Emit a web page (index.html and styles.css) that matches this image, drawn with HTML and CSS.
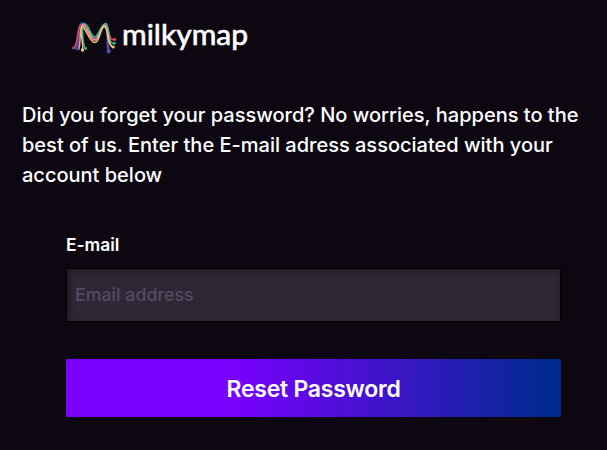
FILE: index.html
```html
<!DOCTYPE html>
<html lang="en">
<head>
    <meta charset="UTF-8">
    <meta name="viewport" content="width=device-width, initial-scale=1.0">
    <title>Milkymap - Reset Password</title>
    <link rel="stylesheet" href="styles.css">
</head>
<body>
    <header class="header">
        <svg class="logo" width="180" height="40" viewBox="0 0 180 40" role="img" aria-label="milkymap">
            <!-- colored strands -->
            <g class="strands">
                <path stroke="#4b4fa8" d="M7.5 31 C10 24 7 7 12 5 C17 4 20 20 25 20 C30 20 30 5 35 6 C39 8 36 24 38 33"/>
                <path stroke="#5a4ea6" d="M5 31 C9 27 8 12 12 9 M37 12 C39 20 36 28 40 33"/>
                <path stroke="#e8485f" d="M3 30 C9 28 6 10 11 7 C16 6 20 23 25 22.5 C30 22 30 8 35 7 C40 8 38 24 44.5 21.5"/>
                <path stroke="#32b58c" d="M15.5 30.5 C12 25 12 7 14 5.5 C19 5 20 19 25 19 C29 18 31 5 36 5.5 C40 8 37 27 44.5 25.5"/>
                <path stroke="#e79aa8" d="M9 31 C11 24 9 8 13 6.5 C17 6 20 22 25 21.5 C30 21 31 7 35 7 C38 9 38 26 42 29"/>
                <path stroke="#e9c878" d="M12.5 32 C14 26 9 11 12 8.5 C15 8 20 25 25 24.5 C30 24 30 10 34 8.5 C39 9 36 27 43 29"/>
            </g>
            <circle cx="3" cy="30" r="1.2" fill="#b9405f"/>
            <circle cx="7.5" cy="31" r="1.4" fill="#4b4fa8"/>
            <circle cx="12.5" cy="32" r="1.7" fill="#e9c878"/>
            <circle cx="15.7" cy="30.5" r="1.4" fill="#32b58c"/>
            <circle cx="38.5" cy="33.5" r="2" fill="#5350a8"/>
            <circle cx="44.5" cy="21.3" r="1.6" fill="#e8485f"/>
            <circle cx="44.5" cy="25.3" r="1.4" fill="#32b58c"/>
            <circle cx="43.3" cy="29" r="1.5" fill="#e9c878"/>
            <text class="wordmark" x="52" y="27" textLength="126" lengthAdjust="spacingAndGlyphs">milkymap</text>
        </svg>
    </header>

    <p class="intro">Did you forget your password? No worries, happens to the best of us. Enter the E-mail adress associated with your account below</p>

    <form class="reset-form">
        <label class="label" for="email">E-mail</label>
        <input class="input" type="email" id="email" placeholder="Email address">
        <button class="button" type="submit">Reset Password</button>
    </form>
</body>
</html>
```

FILE: styles.css
```css
* {
    margin: 0;
    padding: 0;
    box-sizing: border-box;
}

body {
    font-family: Inter, sans-serif;
    background: #0d0711;
    color: #ffffff;
    min-height: 100vh;
    padding: 18px 22px 0;
}

.header {
    height: 82px;
    padding-left: 48px;
}

.logo {
    display: block;
    overflow: visible;
}

.strands {
    fill: none;
    stroke-width: 1.5;
    stroke-linecap: round;
}

.wordmark {
    font-family: Lato, sans-serif;
    font-size: 28px;
    font-weight: 400;
    fill: #ffffff;
    stroke: #ffffff;
    stroke-width: 0.6;
    stroke-linejoin: round;
}

.intro {
    font-size: 20px;
    font-weight: 500;
    line-height: 30px;
}

.reset-form {
    display: flex;
    flex-direction: column;
    width: 495px;
    margin: 43px 0 0 44px;
}

.label {
    font-size: 17.4px;
    font-weight: 600;
    line-height: 24px;
    margin-bottom: 11px;
}

.input {
    height: 54px;
    padding: 0 8px 2px;
    background: #2f2736;
    border: 1px solid #000000;
    box-shadow: inset 2px 2px 6px rgba(0, 0, 0, 0.4);
    color: #ffffff;
    font-family: inherit;
    font-size: 17.8px;
    font-weight: 500;
}

.input::placeholder {
    color: #544b62;
}

.button {
    height: 58px;
    margin-top: 37px;
    padding-top: 2px;
    border: none;
    border-radius: 2px;
    background: linear-gradient(90deg, #7a00ff 33%, #002991 98%);
    color: #ffffff;
    font-family: inherit;
    font-size: 23px;
    font-weight: 600;
    letter-spacing: -0.25px;
}
```
